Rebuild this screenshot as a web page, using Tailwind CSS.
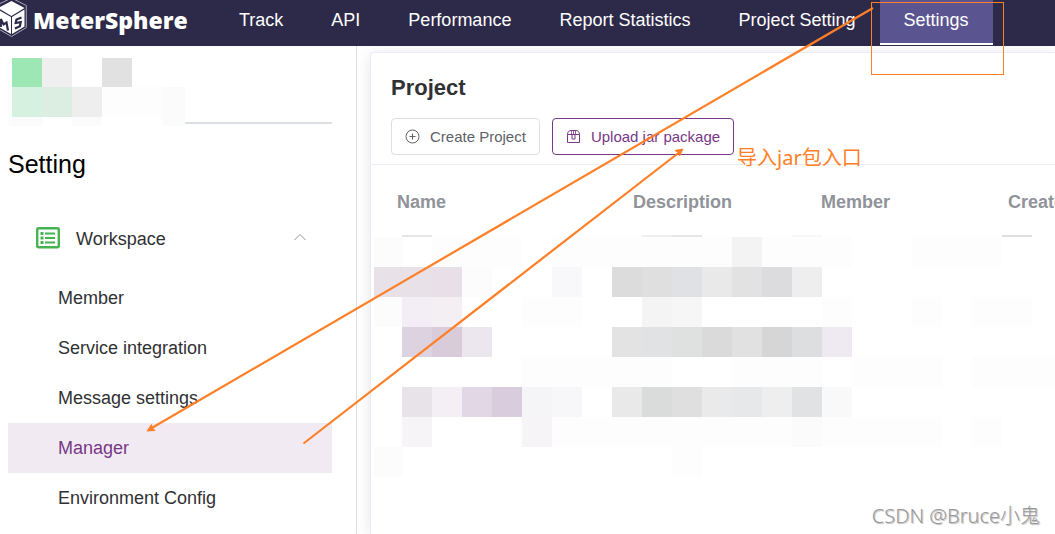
<!DOCTYPE html>
<html lang="en">
<head>
<meta charset="utf-8">
<title>MeterSphere - Project</title>
<script src="https://cdn.jsdelivr.net/npm/@tailwindcss/browser@4"></script>
</head>
<body class="relative flex h-screen flex-col overflow-hidden bg-white font-['Liberation_Sans',Arial,sans-serif] text-lg text-[#303133]">
<header class="flex h-[46px] shrink-0 items-start bg-[#2d2a49] text-white">
  <a href="#" class="flex h-10 w-[215px] shrink-0 items-center gap-[6px]" aria-label="MeterSphere">
    <svg class="h-10 w-[27px] shrink-0" viewBox="0 0 27 40" aria-hidden="true">
      <path d="M11.500-2 26.300 5.500v22L11.500 36.500-4 27.500v-22z" fill="none" stroke="#aaa8ba" stroke-width="1"/>
      <path d="M11.500 1 24.500 8 11.500 16-2 8z" fill="#fff"/>
      <path d="M12 17 24.500 9.500v17L12 34zM11 17-2 9.500v17L11 34z" fill="#fff"/>
      <path d="M.8 27V19l2.700 5.500 3-2 1.500 8M21.500 17.500l-5 2-.8 3.500 5-.8-.8 4-5 2.300" fill="none" stroke="#2d2a49" stroke-width="2.200"/>
    </svg>
    <span class="font-['Open_Sans',sans-serif] text-[23px] leading-10 font-extrabold">MeterSphere</span>
  </a>
  <nav class="flex h-[45px] whitespace-nowrap leading-10">
    <a href="#" class="px-6">Track</a>
    <a href="#" class="px-6">API</a>
    <a href="#" class="px-6">Performance</a>
    <a href="#" class="px-6">Report Statistics</a>
    <a href="#" class="px-6">Project Setting</a>
    <a href="#" class="border-b-2 border-white bg-[#5a5591] px-6" aria-current="page">Settings</a>
  </nav>
</header>
<div class="flex min-h-0 flex-1">
  <aside class="w-[357px] shrink-0 border-r border-[#dcdfe6] pl-2 pr-6">
    <svg class="mt-3 h-[68px] w-full" aria-hidden="true">
      <path fill="#fbfdfc" d="M0 0h4v68H0z"/>
      <path fill="#9ce7b3" d="M4 0h30v29H4z"/><path fill="#efefef" d="M34 0h30v29H34z"/><path fill="#e1e1e1" d="M94 0h30v29H94z"/>
      <path fill="#d7f1e0" d="M4 29h30v30H4z"/><path fill="#dceee1" d="M34 29h30v30H34z"/><path fill="#eeeeee" d="M64 29h30v30H64z"/>
      <path fill="#fdfdfd" d="M94 29h60v30H94z"/><path fill="#fbfbfb" d="M154 29h23v39h-23zM4 59h30v9H4zM64 59h30v9H64z"/>
      <path fill="#dcdfe3" d="M177 64h147v2H177z"/>
    </svg>
    <h2 class="mt-5 text-[25px] leading-9 text-black">Setting</h2>
    <button class="mt-7 flex h-[57px] w-full items-center pl-7 pr-[26px]" aria-expanded="true">
      <svg class="mr-4 h-6 w-6" viewBox="0 0 24 24" fill="none" stroke="#45b450" aria-hidden="true">
        <rect x="1.200" y="1.200" width="21.600" height="19" rx="1.500" stroke-width="2.400"/>
        <path d="M9 6.500h10M9 11h10M9 15.500h10" stroke-width="2"/><path d="M4.500 6.500h3M4.500 11h3M4.500 15.500h3" stroke-width="3"/>
      </svg>
      Workspace
      <svg class="ml-auto h-3 w-3" viewBox="0 0 12 12" fill="none" stroke="#909399" aria-hidden="true"><path d="M.5 7 6 1.500 11.500 7"/></svg>
    </button>
    <nav class="mt-[6px] flex flex-col whitespace-nowrap leading-[50px]">
      <a href="#" class="pl-[50px]">Member</a>
      <a href="#" class="pl-[50px]">Service integration</a>
      <a href="#" class="pl-[50px]">Message settings</a>
      <a href="#" class="bg-[#f2eaf3] pl-[50px] text-[#783887]" aria-current="page">Manager</a>
      <a href="#" class="pl-[50px]">Environment Config</a>
    </nav>
  </aside>
  <main class="min-w-0 flex-1 overflow-hidden pl-[13px] pt-[6px]">
    <section class="h-full rounded-tl border-l border-t border-[#e9ecf6] shadow-[0_2px_15px_rgba(0,0,0,0.1)]">
      <div class="border-b border-[#ebeef5] px-5 pb-[9px] pt-5">
        <h1 class="text-[22px] leading-[30px] font-bold">Project</h1>
        <div class="mt-[15px] flex gap-3 text-[15px]">
          <button class="flex h-[37px] items-center gap-[9px] rounded border border-[#dcdfe6] px-[13px] text-[#606266]">
            <svg class="h-4 w-4" viewBox="0 0 16 16" fill="none" stroke="currentColor" aria-hidden="true"><circle cx="7.500" cy="7.500" r="6.500"/><path d="M4.500 7.500h6M7.500 4.500v6"/></svg>
            Create Project
          </button>
          <button class="flex h-[37px] items-center gap-[9px] rounded border border-[#783887] px-[13px] text-[#783887]">
            <svg class="h-4 w-4" viewBox="0 0 16 16" fill="none" stroke="currentColor" aria-hidden="true"><path d="M1.500 5.500C1.500 3 3 1.500 5 1.500h5c2 0 3.500 1.500 3.500 4v8h-12zM1.500 5.500h12M6 5.500v4.500h3V5.500"/><path d="M5.500 5.500v-4M9.500 5.500v-4M7.500 1.500v4" stroke-width=".8"/></svg>
            Upload jar package
          </button>
        </div>
      </div>
      <table class="w-[860px] table-fixed text-left whitespace-nowrap text-[#909399]">
        <thead>
          <tr class="h-[70px]">
            <th class="w-[236px] pl-[26px] pt-1">Name</th>
            <th class="w-[188px] pl-[26px] pt-1">Description</th>
            <th class="w-[187px] pl-[26px] pt-1">Member</th>
            <th class="pl-[26px] pt-1">Create Time</th>
          </tr>
        </thead>
        <tbody>
          <tr><td colspan="4" class="py-0 pl-px pr-0">
            <svg class="block h-[242px] w-full" shape-rendering="crispEdges" aria-hidden="true">
              <path fill="#e6e6e6" d="M30 0h30v2H30zM300 0h30v2h-30z"/><path fill="#eeeeee" d="M270 0h30v2h-30z"/><path fill="#f8f8f8" d="M420 0h30v2h-30z"/><path fill="#e0e0e0" d="M630 0h30v2h-30z"/>
              <path fill="#fcfcfc" d="M2 2h28v30H2zM2 62h28v30H2zM2 212h28v30H2z"/>
              <path fill="#fdfdfd" d="M60 2h90v30H60zM180 2h180v30H180zM390 2h90v30h-90zM540 2h90v30h-90zM150 62h60v30h-60zM450 62h30v30h-30zM540 62h30v30h-30zM600 62h60v30h-60zM150 122h150v30H150zM360 122h90v30h-90zM480 122h90v30h-90zM600 122h83v30h-83zM180 182h240v30H180zM450 182h120v30H450zM600 182h30v30h-30zM300 212h30v30h-30z"/>
              <path fill="#f3f3f3" d="M360 2h30v30h-30z"/>
              <path fill="#e8e1e8" d="M2 32h58v30H2z"/><path fill="#e9dfe8" d="M60 32h30v30H60z"/><path fill="#fcfcfc" d="M90 32h30v30H90z"/><path fill="#f8f7fa" d="M180 32h30v30h-30z"/>
              <path fill="#dcdcdc" d="M240 32h30v30h-30z"/><path fill="#dfdfdf" d="M270 32h30v30h-30z"/><path fill="#e0e1e4" d="M300 32h30v30h-30z"/><path fill="#e9e9e9" d="M330 32h30v30h-30z"/><path fill="#e2e2e2" d="M360 32h30v30h-30z"/><path fill="#dcdcdf" d="M390 32h30v30h-30z"/><path fill="#eeeeee" d="M420 32h30v30h-30z"/>
              <path fill="#f3eef5" d="M30 62h30v30H30z"/><path fill="#f4eff3" d="M60 62h30v30H60z"/><path fill="#f4f4f4" d="M270 62h30v30h-30z"/><path fill="#f6f6f6" d="M300 62h30v30h-30z"/>
              <path fill="#ddd2df" d="M30 92h30v30H30z"/><path fill="#d9cbda" d="M60 92h30v30H60z"/><path fill="#ece7ee" d="M90 92h30v30H90z"/>
              <path fill="#e3e3e3" d="M240 92h30v30h-30z"/><path fill="#e0e2e4" d="M270 92h30v30h-30z"/><path fill="#dee1df" d="M300 92h30v30h-30z"/><path fill="#dadada" d="M330 92h30v30h-30z"/><path fill="#e1e1e1" d="M360 92h30v30h-30z"/><path fill="#d6d6d6" d="M390 92h30v30h-30z"/><path fill="#dcdee0" d="M420 92h30v30h-30z"/><path fill="#efeaf1" d="M450 92h30v30h-30z"/>
              <path fill="#e8e2e9" d="M30 152h30v30H30z"/><path fill="#f4eff5" d="M60 152h30v30H60z"/><path fill="#e1d7e5" d="M90 152h30v30H90z"/><path fill="#d9ccdd" d="M120 152h30v30h-30z"/><path fill="#f5f4f7" d="M150 152h30v30h-30z"/><path fill="#f7f6f9" d="M180 152h30v30h-30z"/>
              <path fill="#e9e9e9" d="M240 152h30v30h-30z"/><path fill="#d9dcda" d="M270 152h30v30h-30z"/><path fill="#dfdfdf" d="M300 152h30v30h-30z"/><path fill="#eaeaea" d="M330 152h30v30h-30z"/><path fill="#e6e8e9" d="M360 152h30v30h-30z"/><path fill="#eeeeee" d="M390 152h30v30h-30z"/><path fill="#e1e2e4" d="M420 152h30v30h-30z"/><path fill="#f9f9f9" d="M450 152h30v30h-30z"/>
              <path fill="#f6f4f7" d="M30 182h30v30H30zM150 182h30v30h-30z"/><path fill="#fbfbfb" d="M420 182h30v30h-30z"/>
            </svg>
          </td></tr>
        </tbody>
      </table>
    </section>
  </main>
</div>
<!-- Hand-drawn guide marks and labels over the page -->
<svg class="pointer-events-none absolute left-0 top-0 h-[534px] w-[1055px]" fill="none" stroke="#ff7f27" aria-hidden="true">
  <rect x="871.500" y="2.500" width="132" height="72"/>
  <path d="M873 8 150 429M303.500 443.500 681 151" stroke-width="2.200"/>
  <path d="M147 431 151.500 424.500 152 427.500 155 430.500zM683 149 679.500 156 678.500 152.500 675 150.500z" fill="#ff7f27"/>
</svg>
<p class="absolute left-[737px] top-[144px] font-['Noto_Sans','Noto_Sans_CJK_SC',sans-serif] text-xl leading-7 text-[#ff7f27]">导入jar包入口</p>
<p class="absolute bottom-1 right-[15px] font-['Noto_Sans','Noto_Sans_CJK_SC',sans-serif] text-xl leading-7 font-light text-[#999999] [text-shadow:1px_1px_1px_#bbbbbb]">CSDN @Bruce小鬼</p>
</body>
</html>
